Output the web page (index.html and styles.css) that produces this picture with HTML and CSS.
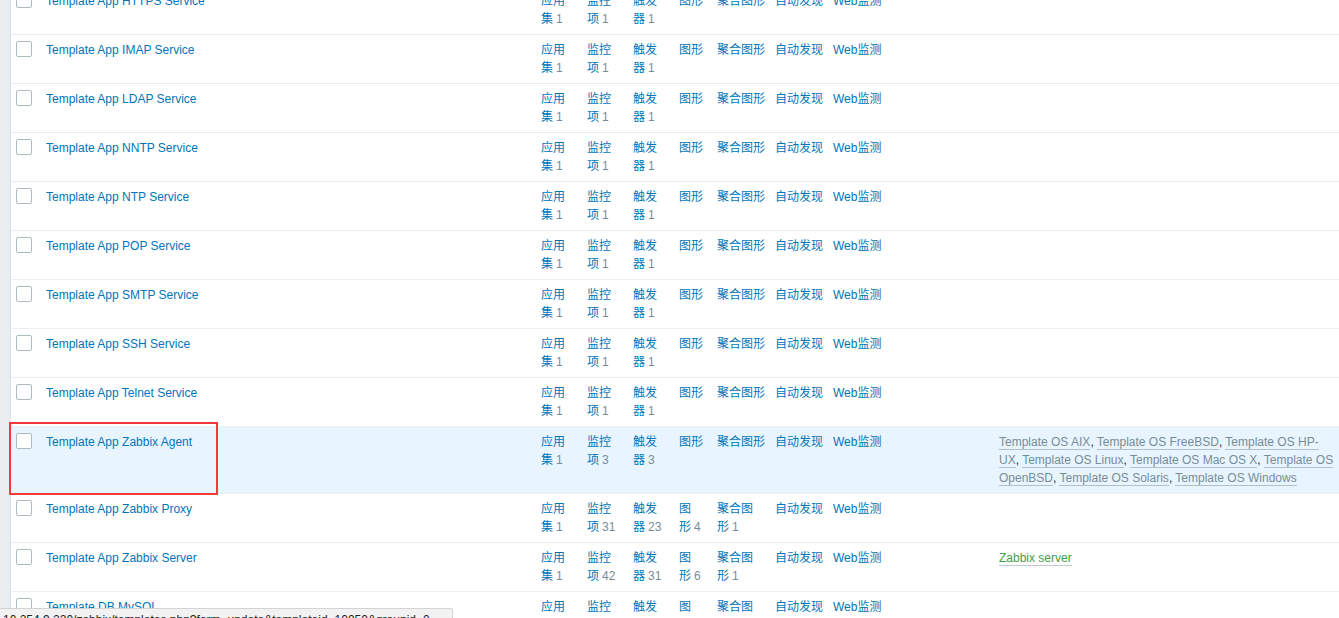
FILE: index.html
```html
<!DOCTYPE html>
<html lang="zh-CN">
<head>
<meta charset="utf-8">
<title>Templates</title>
<link rel="stylesheet" href="styles.css">
</head>
<body>
<div class="page">
  <div class="side"></div>
  <div class="main">
    <table class="list">
      <colgroup>
        <col class="c-check"><col class="c-name"><col class="c-apps"><col class="c-items"><col class="c-trig"><col class="c-graph"><col class="c-screen"><col class="c-disc"><col class="c-web"><col class="c-ltpl"><col>
      </colgroup>
      <tbody>
        <tr>
          <td><input type="checkbox" class="cb"></td>
          <td><a href="#">Template App HTTPS Service</a></td>
          <td><a href="#">应用<span class="nw">集<sup class="cnt">1</sup></span></a></td>
          <td><a href="#">监控<span class="nw">项<sup class="cnt">1</sup></span></a></td>
          <td><a href="#">触发<span class="nw">器<sup class="cnt">1</sup></span></a></td>
          <td><a href="#">图形</a></td>
          <td><a href="#">聚合图形</a></td>
          <td><a href="#">自动发现</a></td>
          <td><a href="#">Web监测</a></td>
          <td></td><td></td>
        </tr>
        <tr>
          <td><input type="checkbox" class="cb"></td>
          <td><a href="#">Template App IMAP Service</a></td>
          <td><a href="#">应用<span class="nw">集<sup class="cnt">1</sup></span></a></td>
          <td><a href="#">监控<span class="nw">项<sup class="cnt">1</sup></span></a></td>
          <td><a href="#">触发<span class="nw">器<sup class="cnt">1</sup></span></a></td>
          <td><a href="#">图形</a></td>
          <td><a href="#">聚合图形</a></td>
          <td><a href="#">自动发现</a></td>
          <td><a href="#">Web监测</a></td>
          <td></td><td></td>
        </tr>
        <tr>
          <td><input type="checkbox" class="cb"></td>
          <td><a href="#">Template App LDAP Service</a></td>
          <td><a href="#">应用<span class="nw">集<sup class="cnt">1</sup></span></a></td>
          <td><a href="#">监控<span class="nw">项<sup class="cnt">1</sup></span></a></td>
          <td><a href="#">触发<span class="nw">器<sup class="cnt">1</sup></span></a></td>
          <td><a href="#">图形</a></td>
          <td><a href="#">聚合图形</a></td>
          <td><a href="#">自动发现</a></td>
          <td><a href="#">Web监测</a></td>
          <td></td><td></td>
        </tr>
        <tr>
          <td><input type="checkbox" class="cb"></td>
          <td><a href="#">Template App NNTP Service</a></td>
          <td><a href="#">应用<span class="nw">集<sup class="cnt">1</sup></span></a></td>
          <td><a href="#">监控<span class="nw">项<sup class="cnt">1</sup></span></a></td>
          <td><a href="#">触发<span class="nw">器<sup class="cnt">1</sup></span></a></td>
          <td><a href="#">图形</a></td>
          <td><a href="#">聚合图形</a></td>
          <td><a href="#">自动发现</a></td>
          <td><a href="#">Web监测</a></td>
          <td></td><td></td>
        </tr>
        <tr>
          <td><input type="checkbox" class="cb"></td>
          <td><a href="#">Template App NTP Service</a></td>
          <td><a href="#">应用<span class="nw">集<sup class="cnt">1</sup></span></a></td>
          <td><a href="#">监控<span class="nw">项<sup class="cnt">1</sup></span></a></td>
          <td><a href="#">触发<span class="nw">器<sup class="cnt">1</sup></span></a></td>
          <td><a href="#">图形</a></td>
          <td><a href="#">聚合图形</a></td>
          <td><a href="#">自动发现</a></td>
          <td><a href="#">Web监测</a></td>
          <td></td><td></td>
        </tr>
        <tr>
          <td><input type="checkbox" class="cb"></td>
          <td><a href="#">Template App POP Service</a></td>
          <td><a href="#">应用<span class="nw">集<sup class="cnt">1</sup></span></a></td>
          <td><a href="#">监控<span class="nw">项<sup class="cnt">1</sup></span></a></td>
          <td><a href="#">触发<span class="nw">器<sup class="cnt">1</sup></span></a></td>
          <td><a href="#">图形</a></td>
          <td><a href="#">聚合图形</a></td>
          <td><a href="#">自动发现</a></td>
          <td><a href="#">Web监测</a></td>
          <td></td><td></td>
        </tr>
        <tr>
          <td><input type="checkbox" class="cb"></td>
          <td><a href="#">Template App SMTP Service</a></td>
          <td><a href="#">应用<span class="nw">集<sup class="cnt">1</sup></span></a></td>
          <td><a href="#">监控<span class="nw">项<sup class="cnt">1</sup></span></a></td>
          <td><a href="#">触发<span class="nw">器<sup class="cnt">1</sup></span></a></td>
          <td><a href="#">图形</a></td>
          <td><a href="#">聚合图形</a></td>
          <td><a href="#">自动发现</a></td>
          <td><a href="#">Web监测</a></td>
          <td></td><td></td>
        </tr>
        <tr>
          <td><input type="checkbox" class="cb"></td>
          <td><a href="#">Template App SSH Service</a></td>
          <td><a href="#">应用<span class="nw">集<sup class="cnt">1</sup></span></a></td>
          <td><a href="#">监控<span class="nw">项<sup class="cnt">1</sup></span></a></td>
          <td><a href="#">触发<span class="nw">器<sup class="cnt">1</sup></span></a></td>
          <td><a href="#">图形</a></td>
          <td><a href="#">聚合图形</a></td>
          <td><a href="#">自动发现</a></td>
          <td><a href="#">Web监测</a></td>
          <td></td><td></td>
        </tr>
        <tr>
          <td><input type="checkbox" class="cb"></td>
          <td><a href="#">Template App Telnet Service</a></td>
          <td><a href="#">应用<span class="nw">集<sup class="cnt">1</sup></span></a></td>
          <td><a href="#">监控<span class="nw">项<sup class="cnt">1</sup></span></a></td>
          <td><a href="#">触发<span class="nw">器<sup class="cnt">1</sup></span></a></td>
          <td><a href="#">图形</a></td>
          <td><a href="#">聚合图形</a></td>
          <td><a href="#">自动发现</a></td>
          <td><a href="#">Web监测</a></td>
          <td></td><td></td>
        </tr>
        <tr class="sel">
          <td><input type="checkbox" class="cb"></td>
          <td><a href="#">Template App Zabbix Agent</a></td>
          <td><a href="#">应用<span class="nw">集<sup class="cnt">1</sup></span></a></td>
          <td><a href="#">监控<span class="nw">项<sup class="cnt">3</sup></span></a></td>
          <td><a href="#">触发<span class="nw">器<sup class="cnt">3</sup></span></a></td>
          <td><a href="#">图形</a></td>
          <td><a href="#">聚合图形</a></td>
          <td><a href="#">自动发现</a></td>
          <td><a href="#">Web监测</a></td>
          <td></td>
          <td><a href="#" class="alt grey">Template OS AIX</a>, <a href="#" class="alt grey">Template OS FreeBSD</a>, <a href="#" class="alt grey">Template OS HP-UX</a>, <a href="#" class="alt grey">Template OS Linux</a>, <a href="#" class="alt grey">Template OS Mac OS X</a>, <a href="#" class="alt grey">Template OS OpenBSD</a>, <a href="#" class="alt grey">Template OS Solaris</a>, <a href="#" class="alt grey">Template OS Windows</a></td>
        </tr>
        <tr>
          <td><input type="checkbox" class="cb"></td>
          <td><a href="#">Template App Zabbix Proxy</a></td>
          <td><a href="#">应用<span class="nw">集<sup class="cnt">1</sup></span></a></td>
          <td><a href="#">监控<span class="nw">项<sup class="cnt">31</sup></span></a></td>
          <td><a href="#">触发<span class="nw">器<sup class="cnt">23</sup></span></a></td>
          <td><a href="#">图<span class="nw">形<sup class="cnt">4</sup></span></a></td>
          <td><a href="#">聚合图<span class="nw">形<sup class="cnt">1</sup></span></a></td>
          <td><a href="#">自动发现</a></td>
          <td><a href="#">Web监测</a></td>
          <td></td><td></td>
        </tr>
        <tr>
          <td><input type="checkbox" class="cb"></td>
          <td><a href="#">Template App Zabbix Server</a></td>
          <td><a href="#">应用<span class="nw">集<sup class="cnt">1</sup></span></a></td>
          <td><a href="#">监控<span class="nw">项<sup class="cnt">42</sup></span></a></td>
          <td><a href="#">触发<span class="nw">器<sup class="cnt">31</sup></span></a></td>
          <td><a href="#">图<span class="nw">形<sup class="cnt">6</sup></span></a></td>
          <td><a href="#">聚合图<span class="nw">形<sup class="cnt">1</sup></span></a></td>
          <td><a href="#">自动发现</a></td>
          <td><a href="#">Web监测</a></td>
          <td></td>
          <td><a href="#" class="alt green">Zabbix server</a></td>
        </tr>
        <tr>
          <td><input type="checkbox" class="cb"></td>
          <td><a href="#">Template DB MySQL</a></td>
          <td><a href="#">应用<span class="nw">集<sup class="cnt">1</sup></span></a></td>
          <td><a href="#">监控<span class="nw">项<sup class="cnt">14</sup></span></a></td>
          <td><a href="#">触发<span class="nw">器<sup class="cnt">1</sup></span></a></td>
          <td><a href="#">图<span class="nw">形<sup class="cnt">2</sup></span></a></td>
          <td><a href="#">聚合图<span class="nw">形<sup class="cnt">1</sup></span></a></td>
          <td><a href="#">自动发现</a></td>
          <td><a href="#">Web监测</a></td>
          <td></td><td></td>
        </tr>
      </tbody>
    </table>
  </div>
</div>
<div class="mark"></div>
<div class="status">10.254.9.220/zabbix/templates.php?form=update&amp;templateid=10050&amp;groupid=0</div>
</body>
</html>
```

FILE: styles.css
```css
* { box-sizing: border-box; }

html, body {
  margin: 0;
  padding: 0;
  height: 100%;
  overflow: hidden;
}

body {
  font-family: "Liberation Sans", Arial, "Noto Sans CJK SC", sans-serif;
  font-size: 12px;
  line-height: 18px;
  color: #1f2c33;
  background: #fff;
}

.page {
  display: flex;
  min-height: 100%;
}

.side {
  flex: none;
  width: 11px;
  background: #ebeef0;
  border-right: 1px solid #dfe4e7;
}

.main {
  flex: 1;
  margin-top: -14px;
}

.list {
  width: 100%;
  border-collapse: collapse;
  table-layout: fixed;
}

.c-check { width: 30px; }
.c-name { width: 495px; }
.c-apps, .c-items, .c-trig { width: 46px; }
.c-graph { width: 38px; }
.c-screen, .c-disc { width: 58px; }
.c-web { width: 60px; }
.c-ltpl { width: 106px; }

.list td {
  padding: 6px 5px;
  vertical-align: top;
  border-bottom: 1px solid #ebeef0;
}

.list tr.sel td {
  background: #e8f5ff;
}

.cb {
  -webkit-appearance: none;
  appearance: none;
  display: block;
  width: 16px;
  height: 16px;
  margin: 0;
  background: #fff;
  border: 1px solid #acbbc0;
  border-radius: 2px;
}

a {
  color: #0275b8;
  text-decoration: none;
}

.nw { white-space: nowrap; }

.cnt {
  vertical-align: baseline;
  font-size: 12px;
  line-height: 0;
  color: #768d99;
  margin-left: 3px;
}

.alt {
  border-bottom: 1px solid rgba(118, 141, 153, 0.5);
}

.alt.grey { color: #768d99; }

.alt.green {
  color: #429e47;
  border-bottom-color: #c3c9cd;
}

.mark {
  position: absolute;
  left: 9px;
  top: 422px;
  width: 209px;
  height: 73px;
  border: 2px solid #f23a3a;
  pointer-events: none;
}

.status {
  position: fixed;
  left: 0;
  top: 608px;
  width: 453px;
  height: 20px;
  padding: 2px 3px 0;
  background: #f2f2f2;
  border-top: 1px solid #d3d3d3;
  border-right: 1px solid #d3d3d3;
  border-top-right-radius: 3px;
  color: #222;
  white-space: nowrap;
  overflow: hidden;
}
```
